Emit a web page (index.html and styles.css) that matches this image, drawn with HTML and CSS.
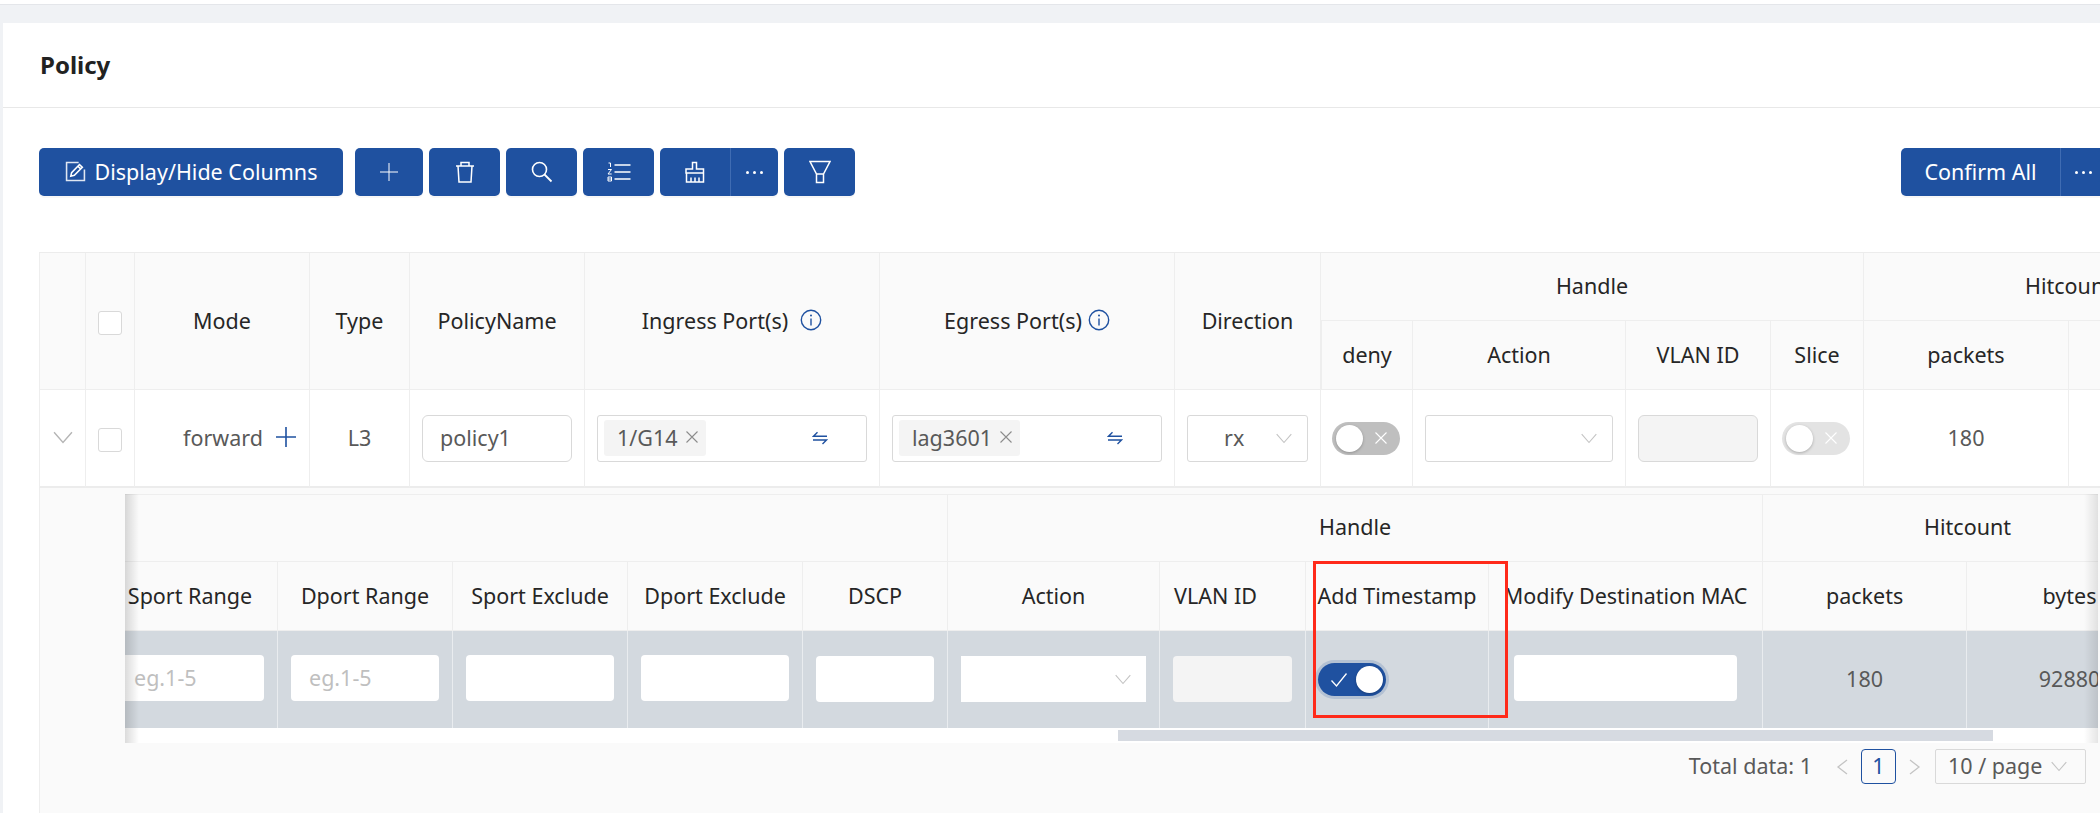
FILE: index.html
```html
<!DOCTYPE html>
<html lang="en">
<head>
<meta charset="utf-8">
<title>Policy</title>
<link rel="stylesheet" href="styles.css">
</head>
<body>
<svg class="defs" width="0" height="0" aria-hidden="true">
  <symbol id="chev" viewBox="0 0 16 16"><path d="M1.500 4.500 8 12l6.500-7.500" fill="none" stroke="currentColor" stroke-width="1"/></symbol>
  <symbol id="x" viewBox="0 0 14 14"><path d="M1.500 1.500l11 11M12.500 1.500l-11 11" fill="none" stroke="currentColor" stroke-width="1.100"/></symbol>
  <symbol id="swap" viewBox="0 0 16 16"><path d="M15 6.200H1.500L5.500 2.200M1 10h13.500l-4 4" fill="none" stroke="currentColor" stroke-width="1.400"/></symbol>
  <symbol id="info" viewBox="0 0 22 22"><circle cx="11" cy="11" r="9.700" fill="none" stroke="currentColor" stroke-width="1.400"/><path d="M11 9.500v7" stroke="currentColor" stroke-width="1.400"/><circle cx="11" cy="6.500" r="1" fill="currentColor"/></symbol>
</svg>
<div class="topbar"></div>
<main class="card">
  <h1 class="title">Policy</h1>
  <div class="toolbar">
    <button class="btn btn-text"><svg class="ic" width="21" height="21" viewBox="0 0 20 20"><path d="M13 1.500H1.500v17h17V8" fill="none" stroke="#dfe6f2" stroke-width="1.500"/><path d="M5.500 14.500l.8-3.400L13.800 3.400l2.700 2.500-7.600 7.700zM12.300 5l2.600 2.500" fill="none" stroke="#fff" stroke-width="1.500"/></svg>Display/Hide Columns</button>
    <button class="btn btn-icon w68"><svg width="18" height="18" viewBox="0 0 18 18"><path d="M9 0v18M0 9h18" stroke="#fff" stroke-width="1"/></svg></button>
    <button class="btn btn-icon w71"><svg width="20" height="22" viewBox="0 0 20 22"><path d="M1 5h18M6 5V1.500h8V5M3 5l1 16h12l1-16" fill="none" stroke="#fff" stroke-width="1.500"/></svg></button>
    <button class="btn btn-icon w71"><svg width="22" height="22" viewBox="0 0 22 22"><circle cx="8.500" cy="8.500" r="7" fill="none" stroke="#fff" stroke-width="1.600"/><path d="M13.500 13.500l7 7" stroke="#fff" stroke-width="1.800"/></svg></button>
    <button class="btn btn-icon w71"><svg width="24" height="20" viewBox="0 0 24 20"><path d="M7.500 3h16M7.500 10h16M7.500 17h16" stroke="#fff" stroke-width="1.600"/><path d="M1.500 1h2v4M1 7.500h3.500L1 12h3.700M1 15h3.500v4H1zM1 17h3.500" fill="none" stroke="#fff" stroke-width="1"/></svg></button>
    <div class="btn-group">
      <button class="btn btn-icon w70 seg-left"><svg width="22" height="22" viewBox="0 0 22 22"><path d="M8.500 8V1.500h4V8h7v4H2V8zM2.500 12v9h17v-9M7 21v-4.500M11 21v-4.500M15 21v-4.500" fill="none" stroke="#fff" stroke-width="1.500"/></svg></button>
      <button class="btn btn-icon w48 seg-right"><span class="dots"><i></i><i></i><i></i></span></button>
    </div>
    <button class="btn btn-icon w71"><svg width="22" height="24" viewBox="0 0 22 24"><path d="M1 1.500h20L14.500 14h-7zM7.500 14v8.500h7V14" fill="none" stroke="#fff" stroke-width="1.500"/></svg></button>
    <div class="confirm">
      <button class="btn btn-confirm seg-left">Confirm All</button>
      <button class="btn btn-more seg-right"><span class="dots"><i></i><i></i><i></i></span></button>
    </div>
  </div>
  <div class="table-wrap">
    <table class="outer">
      <colgroup>
        <col class="c47"><col class="c49"><col class="c175"><col class="c100"><col class="c175"><col class="c295"><col class="c295"><col class="c146"><col class="c92"><col class="c213"><col class="c145"><col class="c93"><col class="c205"><col class="c205">
      </colgroup>
      <thead>
        <tr class="h1">
          <th rowspan="2"></th>
          <th rowspan="2"><span class="cb"></span></th>
          <th rowspan="2">Mode</th>
          <th rowspan="2">Type</th>
          <th rowspan="2">PolicyName</th>
          <th rowspan="2"><span class="th-icon">Ingress Port(s)<svg class="info gap12"><use href="#info"/></svg></span></th>
          <th rowspan="2"><span class="th-icon">Egress Port(s)<svg class="info gap6"><use href="#info"/></svg></span></th>
          <th rowspan="2">Direction</th>
          <th colspan="4">Handle</th>
          <th colspan="2">Hitcount</th>
        </tr>
        <tr class="h2">
          <th>deny</th><th>Action</th><th>VLAN ID</th><th>Slice</th><th>packets</th><th>bytes</th>
        </tr>
      </thead>
      <tbody>
        <tr class="row">
          <td><svg class="chev-big"><use href="#chev"/></svg></td>
          <td><span class="cb"></span></td>
          <td><span class="mode">forward<svg class="plus" viewBox="0 0 20 20"><path d="M10 0v20M0 10h20" stroke="currentColor" stroke-width="1.600"/></svg></span></td>
          <td>L3</td>
          <td class="pad"><div class="field rounded">policy1</div></td>
          <td class="pad"><div class="field tagbox"><span class="tag">1/G14<svg class="x"><use href="#x"/></svg></span><svg class="swap"><use href="#swap"/></svg></div></td>
          <td class="pad"><div class="field tagbox"><span class="tag">lag3601<svg class="x"><use href="#x"/></svg></span><svg class="swap"><use href="#swap"/></svg></div></td>
          <td class="pad"><div class="field select center-val"><span class="val">rx</span><svg class="chev"><use href="#chev"/></svg></div></td>
          <td class="pad"><span class="switch off"><i class="knob"></i><svg class="sw-x"><use href="#x"/></svg></span></td>
          <td class="pad"><div class="field select"><svg class="chev"><use href="#chev"/></svg></div></td>
          <td class="pad"><div class="field disabled rounded"></div></td>
          <td class="pad"><span class="switch off dim"><i class="knob"></i><svg class="sw-x"><use href="#x"/></svg></span></td>
          <td>180</td>
          <td>92880</td>
        </tr>
        <tr>
          <td class="expanded" colspan="14">
            <div class="nested">
              <table class="inner">
                <colgroup>
                  <col class="c175"><col class="c175"><col class="c175"><col class="c175"><col class="c145"><col class="c212"><col class="c146"><col class="c183"><col class="c274"><col class="c204"><col class="c206">
                </colgroup>
                <thead>
                  <tr class="n1"><th colspan="5"></th><th colspan="4">Handle</th><th colspan="2">Hitcount</th></tr>
                  <tr class="n2"><th>Sport Range</th><th>Dport Range</th><th>Sport Exclude</th><th>Dport Exclude</th><th>DSCP</th><th>Action</th><th class="th-left">VLAN ID</th><th>Add Timestamp</th><th>Modify Destination MAC</th><th>packets</th><th>bytes</th></tr>
                </thead>
                <tbody>
                  <tr class="nrow">
                    <td class="pad"><div class="nfield ph">eg.1-5</div></td>
                    <td class="pad"><div class="nfield ph">eg.1-5</div></td>
                    <td class="pad"><div class="nfield"></div></td>
                    <td class="pad"><div class="nfield"></div></td>
                    <td class="pad"><div class="nfield low"></div></td>
                    <td class="pad"><div class="nfield low square"><svg class="chev"><use href="#chev"/></svg></div></td>
                    <td class="pad"><div class="nfield low grey"></div></td>
                    <td class="pad tight"><span class="switch on"><svg class="check" width="18" height="16" viewBox="0 0 18 16"><path d="M1.500 8.500 6.500 14 16.500 1.500" fill="none" stroke="#fff" stroke-width="1.300"/></svg><i class="knob"></i></span></td>
                    <td class="pad wide"><div class="nfield"></div></td>
                    <td>180</td>
                    <td>92880</td>
                  </tr>
                </tbody>
              </table>
              <div class="hscroll"><div class="thumb"></div></div>
              <div class="edge-left"></div>
              <div class="edge-right"></div>
              <div class="highlight"></div>
            </div>
            <div class="pager">
              <span class="total">Total data: 1</span>
              <svg class="pg-arrow" width="14" height="20" viewBox="0 0 14 20"><path d="M11 3 2 10l9 7" fill="none" stroke="#c4c4c4" stroke-width="1.300"/></svg>
              <span class="page">1</span>
              <svg class="pg-arrow" width="14" height="20" viewBox="0 0 14 20"><path d="M3 3l9 7-9 7" fill="none" stroke="#c4c4c4" stroke-width="1.300"/></svg>
              <span class="size">10 / page<svg class="chev"><use href="#chev"/></svg></span>
            </div>
          </td>
        </tr>
      </tbody>
    </table>
  </div>
</main>
</body>
</html>
```
FILE: styles.css
```css
* { box-sizing: border-box; }
html, body { margin: 0; height: 813px; overflow: hidden; }
body { background: #f0f2f5; font-family: "Noto Sans", "Open Sans", sans-serif; font-size: 21.5px; color: #262626; }
.defs { position: absolute; }
.topbar { height: 5px; background: #fff; border-bottom: 1px solid #e4e6ea; margin-bottom: 18px; }
.card { margin-left: 3px; background: #fff; height: 790px; overflow: hidden; }
.title { margin: 0; height: 85px; padding-left: 37px; font-size: 24px; font-weight: 700; line-height: 84px; color: #222; border-bottom: 1px solid #e8e8e8; }
.toolbar { display: flex; gap: 6px; margin: 40px 0 56px 36px; height: 48px; position: relative; }
.btn { height: 48px; border: 0; border-radius: 5px; background: #1f51a0; color: #fff; font: inherit; font-size: 21.5px; display: flex; align-items: center; justify-content: center; padding: 0; box-shadow: 0 2px 0 rgba(0,0,0,.03); white-space: nowrap; }
.btn-text { width: 304px; margin-right: 6px; gap: 9px; padding-bottom: 2px; }
.btn-confirm { padding-bottom: 2px; }
.w68 { width: 68px; } .w71 { width: 71px; } .w70 { width: 70px; } .w48 { width: 48px; }
.btn-group { display: flex; }
.seg-left { border-radius: 5px 0 0 5px; }
.seg-right { border-radius: 0 5px 5px 0; border-left: 1px solid #3f6cb3; }
.dots { display: flex; gap: 4px; }
.dots i { width: 3px; height: 3px; border-radius: 50%; background: #fff; }
.confirm { margin-left: auto; display: flex; width: 199px; }
.btn-confirm { width: 159px; flex: none; }
.btn-more { width: 40px; flex: none; justify-content: flex-start; padding-left: 14px; border-radius: 0; }
.table-wrap { margin-left: 36px; width: 2061px; height: 561px; overflow: hidden; border-top: 1px solid #ececec; }
table { border-collapse: separate; border-spacing: 0; table-layout: fixed; }
.outer { width: 2235px; }
.c47 { width: 47px; } .c49 { width: 49px; } .c175 { width: 175px; } .c100 { width: 100px; } .c295 { width: 295px; } .c146 { width: 146px; } .c92 { width: 92px; } .c213 { width: 213px; } .c145 { width: 145px; } .c93 { width: 93px; } .c205 { width: 205px; } .c212 { width: 212px; } .c183 { width: 183px; } .c274 { width: 274px; } .c204 { width: 204px; } .c206 { width: 206px; }
th { background: #fafafa; font-weight: 400; color: #262626; border-right: 1px solid #eeeeee; border-bottom: 1px solid #eeeeee; padding: 0 0 2px; text-align: center; white-space: nowrap; overflow: hidden; }
td { border-right: 1px solid #eeeeee; border-bottom: 1px solid #eeeeee; padding: 0 0 2px; text-align: center; color: #595959; white-space: nowrap; }
.th-left { text-align: left; padding-left: 14px; }
.outer > thead th:first-child, .outer > tbody > .row > td:first-child { border-left: 1px solid #eeeeee; }
.h1 { height: 68px; }
.h2 { height: 69px; }
.row { height: 98px; }
.row > td { border-bottom: 2px solid #ececec; }
.cb { display: inline-block; width: 24px; height: 24px; background: #fff; border: 1px solid #d9d9d9; border-radius: 3px; vertical-align: middle; }
.th-icon { display: inline-flex; align-items: center; }
.info { width: 22px; height: 22px; color: #1f51a0; }
.gap12 { margin-left: 12px; } .gap6 { margin-left: 6px; }
.chev-big { display: block; width: 22px; height: 22px; margin: 0 auto; color: #b5b5b5; }
.mode { display: inline-flex; align-items: center; gap: 13px; margin-left: 35px; }
.plus { width: 20px; height: 20px; color: #1f51a0; }
.pad { padding: 0 12px; text-align: left; }
.field { height: 47px; border: 1px solid #d9d9d9; border-radius: 3px; background: #fff; display: flex; align-items: center; position: relative; color: #595959; padding-bottom: 2px; }
.rounded { border-radius: 6px; padding-left: 17px; }
.tagbox { padding: 0 0 0 6px; }
.tag { display: inline-flex; align-items: center; gap: 7px; height: 36px; padding: 0 7px 2px 13px; background: #f4f4f4; border-radius: 3px; }
.x { width: 14px; height: 14px; color: #8c8c8c; }
.swap { width: 16px; height: 16px; color: #1f51a0; margin-left: auto; margin-right: 38px; }
.select .chev, .nfield .chev { position: absolute; right: 14px; top: 50%; margin-top: -9px; }
.chev { width: 18px; height: 18px; color: #c4c4c4; }
.center-val { padding-left: 36px; }
.disabled { background: #f4f4f4; }
.switch { display: inline-flex; align-items: center; width: 68px; height: 33px; border-radius: 17px; position: relative; vertical-align: middle; }
.switch.off { background: #bfbfbf; padding-left: 4px; margin-left: -1px; }
.switch.dim { background: #e3e3e3; }
.knob { width: 27px; height: 27px; border-radius: 50%; background: #fff; box-shadow: 0 1px 3px rgba(0,0,0,.25); }
.sw-x { width: 14px; height: 14px; color: #fff; margin-left: 11px; }
.switch.on { background: #1f51a0; box-shadow: 0 0 0 3px rgba(31,81,160,.18); padding: 0 3px 0 12px; justify-content: space-between; }
.expanded { background: #fafafa; border-left: 1px solid #eeeeee; border-right: 0; border-bottom: 0; padding: 6px 0 0 85px; text-align: left; vertical-align: top; height: 326px; }
.nested { width: 1973px; height: 249px; overflow: hidden; position: relative; }
.inner { width: 2070px; margin-left: -22px; }
.n1 { height: 68px; }
.n1 th { box-shadow: inset 0 1px 0 #eee; }
.n2 { height: 69px; }
.nrow { height: 97px; }
.nrow td { background: #d3d9df; border-bottom: 0; border-right: 1px solid #e9ecef; }
.nrow .pad { padding: 0 13px; }
.nrow .tight { padding-left: 12px; }
.nrow .wide { padding: 0 25px; }
.nfield { height: 46px; background: #fff; border-radius: 4px; position: relative; padding-left: 18px; line-height: 46px; margin-top: -4px; }
.nfield.low { margin-top: -2px; }
.ph { color: #bfbfbf; }
.square { border-radius: 0; }
.grey { background: #f4f4f4; }
.hscroll { height: 15px; background: #fff; padding-top: 2px; }
.thumb { margin-left: 993px; width: 875px; height: 11px; background: #d6dae1; }
.edge-left { position: absolute; left: 0; top: 0; width: 14px; height: 249px; background: linear-gradient(90deg, rgba(0,0,0,.14), rgba(0,0,0,0)); }
.edge-right { position: absolute; right: 0; top: 0; width: 14px; height: 249px; background: linear-gradient(270deg, rgba(0,0,0,.1), rgba(0,0,0,0)); }
.highlight { position: absolute; left: 1188px; top: 67px; width: 195px; height: 157px; border: 3px solid #ff2a1a; }
.pager { width: 1973px; display: flex; align-items: center; justify-content: flex-end; padding-right: 12px; margin-top: 6px; height: 35px; color: #595959; }
.total { margin-right: 24px; padding-bottom: 2px; }
.page { width: 35px; height: 35px; border: 1px solid #1f51a0; border-radius: 4px; color: #1f51a0; display: flex; align-items: center; justify-content: center; margin: 0 11px; padding-bottom: 2px; }
.size { width: 151px; height: 35px; border: 1px solid #d9d9d9; border-radius: 2px; margin-left: 14px; display: flex; align-items: center; padding: 0 0 2px 12px; gap: 8px; white-space: nowrap; }
```
